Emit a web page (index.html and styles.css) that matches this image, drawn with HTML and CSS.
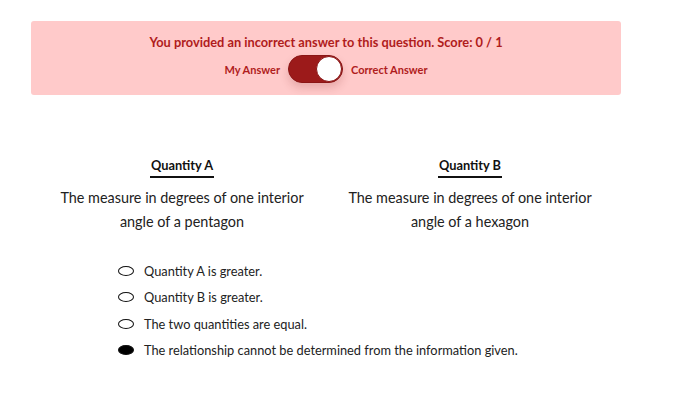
FILE: index.html
```html
<!DOCTYPE html>
<html>
<head>
<meta charset="utf-8">
<link rel="stylesheet" href="styles.css">
</head>
<body>
<div class="page">
  <div class="alert">
    <div class="alert-title">You provided an incorrect answer to this question. Score: 0 / 1</div>
    <div class="switch-row">
      <span class="switch-label">My Answer</span>
      <span class="switch"><span class="knob"></span></span>
      <span class="switch-label">Correct Answer</span>
    </div>
  </div>
  <div class="quantities">
    <div class="quantity">
      <div class="q-head">Quantity A</div>
      <div class="q-text">The measure in degrees of one interior angle of a pentagon</div>
    </div>
    <div class="quantity">
      <div class="q-head">Quantity B</div>
      <div class="q-text">The measure in degrees of one interior angle of a hexagon</div>
    </div>
  </div>
  <ul class="options">
    <li class="option"><span class="radio"></span>Quantity A is greater.</li>
    <li class="option"><span class="radio"></span>Quantity B is greater.</li>
    <li class="option"><span class="radio"></span>The two quantities are equal.</li>
    <li class="option"><span class="radio checked"></span>The relationship cannot be determined from the information given.</li>
  </ul>
</div>
</body>
</html>
```
FILE: styles.css
```css
* { box-sizing: border-box; }
html, body { margin: 0; padding: 0; background: #fff; }
body { font-family: "Lato", "Open Sans", sans-serif; color: #222; }
.page { padding: 21px 0 0 31px; width: 621px; }
.alert {
  width: 590px;
  height: 74px;
  background: #ffcaca;
  border-radius: 3px;
  display: flex;
  flex-direction: column;
  align-items: center;
  padding-top: 13px;
  color: #b01c1c;
}
.alert-title { font-size: 12.8px; font-weight: 700; line-height: 16px; }
.switch-row { display: flex; align-items: center; gap: 8px; margin-top: 5px; }
.switch-label { font-size: 11px; font-weight: 700; }
.switch {
  width: 55px; height: 28px; border-radius: 14px; background: #9c1a1a;
  position: relative; box-shadow: 0 5px 8px rgba(120,30,30,0.18);
  border: 1px solid #8a1515;
}
.knob {
  position: absolute; right: 0; top: 0; width: 26px; height: 26px;
  border-radius: 50%; background: #fff; border: 1px solid #8a1515;
}
.quantities { display: flex; margin-top: 62px; padding-left: 7px; }
.quantity { width: 288px; display: flex; flex-direction: column; align-items: center; }
.q-head {
  font-size: 12.8px; font-weight: 700; color: #111; line-height: 16px;
  padding-bottom: 3px; border-bottom: 2px solid #111; padding-left: 1px; padding-right: 1px;
}
.q-text { font-size: 14.4px; line-height: 24px; text-align: center; margin-top: 8px; width: 270px; color: #222; }
.options { list-style: none; margin: 24px 0 0 87px; padding: 0; }
.option { display: flex; align-items: center; font-size: 12.8px; height: 26.3px; color: #222; }
.radio {
  width: 16px; height: 10px; border: 1px solid #111; border-radius: 50%; margin-right: 10px;
}
.radio.checked { background: #000; }
```
